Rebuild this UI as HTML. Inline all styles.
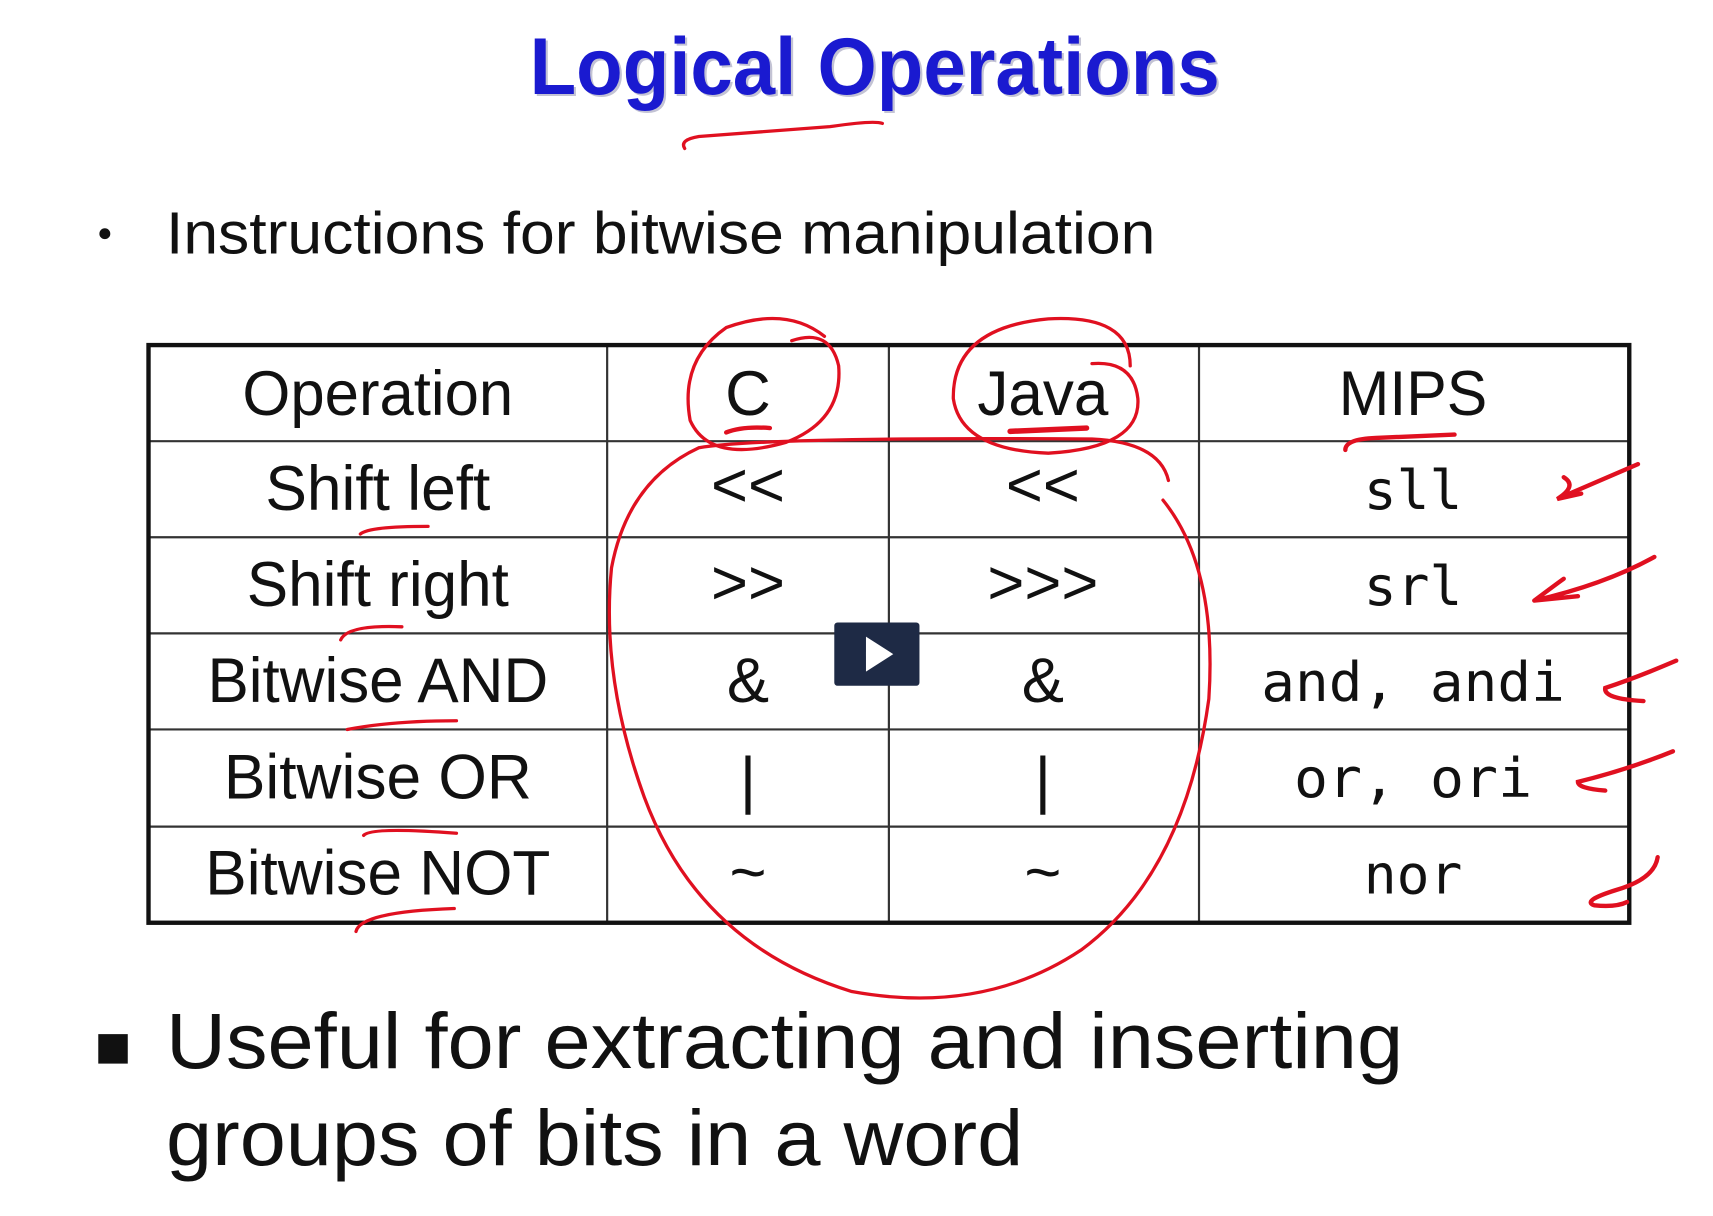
<!DOCTYPE html>
<html><head><meta charset="utf-8"><style>
html,body{margin:0;padding:0;background:#fff;width:1713px;height:1216px;overflow:hidden}
svg{display:block}
</style></head><body>
<svg width="1713" height="1216" viewBox="0 0 1713 1216" xmlns="http://www.w3.org/2000/svg">
<rect width="1713" height="1216" fill="#fff"/>
<g transform="scale(1.092)">
<!-- Title -->
<text x="487" y="88" font-family="Liberation Sans, sans-serif" font-weight="bold" font-size="74" fill="#8888aa" opacity="0.5" textLength="632" lengthAdjust="spacingAndGlyphs">Logical Operations</text>
<text x="485" y="86" font-family="Liberation Sans, sans-serif" font-weight="bold" font-size="74" fill="#1a1ad0" textLength="632" lengthAdjust="spacingAndGlyphs">Logical Operations</text>
<!-- bullet 1 -->
<circle cx="96" cy="214" r="5" fill="#111"/>
<text x="152" y="232" font-family="Liberation Sans, sans-serif" font-size="54" fill="#111" textLength="906" lengthAdjust="spacingAndGlyphs">Instructions for bitwise manipulation</text>
<!-- table grid -->
<g stroke="#333" stroke-width="2">
<line x1="136" y1="404" x2="1492" y2="404"/>
<line x1="136" y1="492" x2="1492" y2="492"/>
<line x1="136" y1="580" x2="1492" y2="580"/>
<line x1="136" y1="668" x2="1492" y2="668"/>
<line x1="136" y1="757" x2="1492" y2="757"/>
<line x1="556" y1="316" x2="556" y2="845"/>
<line x1="814" y1="316" x2="814" y2="845"/>
<line x1="1098" y1="316" x2="1098" y2="845"/>
</g>
<rect x="136" y="316" width="1356" height="529" fill="none" stroke="#111" stroke-width="4"/>
<g font-family="Liberation Sans, sans-serif" font-size="58" fill="#111" text-anchor="middle">
<text x="346" y="380" textLength="248" lengthAdjust="spacingAndGlyphs">Operation</text>
<text x="685" y="380">C</text>
<text x="955" y="380" textLength="120" lengthAdjust="spacingAndGlyphs">Java</text>
<text x="1294" y="380" textLength="136" lengthAdjust="spacingAndGlyphs">MIPS</text>
<text x="346" y="467" textLength="206" lengthAdjust="spacingAndGlyphs">Shift left</text>
<text x="346" y="555" textLength="240" lengthAdjust="spacingAndGlyphs">Shift right</text>
<text x="346" y="643" textLength="312" lengthAdjust="spacingAndGlyphs">Bitwise AND</text>
<text x="346" y="731" textLength="282" lengthAdjust="spacingAndGlyphs">Bitwise OR</text>
<text x="346" y="819" textLength="316" lengthAdjust="spacingAndGlyphs">Bitwise NOT</text>
<text x="685" y="464">&lt;&lt;</text><text x="955" y="464">&lt;&lt;</text>
<text x="685" y="553">&gt;&gt;</text><text x="955" y="553">&gt;&gt;&gt;</text>
<text x="685" y="643">&amp;</text><text x="955" y="643">&amp;</text>
<text x="685" y="734">|</text><text x="955" y="734">|</text>
<text x="685" y="818">~</text><text x="955" y="818">~</text>
</g>
<g font-family="DejaVu Sans Mono, monospace" font-size="50" fill="#111" text-anchor="middle">
<text x="1294" y="466">sll</text>
<text x="1294" y="554">srl</text>
<text x="1294" y="642" textLength="278" lengthAdjust="spacingAndGlyphs">and, andi</text>
<text x="1294" y="730" textLength="218" lengthAdjust="spacingAndGlyphs">or, ori</text>
<text x="1294" y="818">nor</text>
</g>
<!-- bottom bullet -->
<rect x="90" y="947" width="27" height="27" fill="#111"/>
<text x="152" y="978" font-family="Liberation Sans, sans-serif" font-size="72" fill="#111" textLength="1133" lengthAdjust="spacingAndGlyphs">Useful for extracting and inserting</text>
<text x="152" y="1067" font-family="Liberation Sans, sans-serif" font-size="72" fill="#111" textLength="785" lengthAdjust="spacingAndGlyphs">groups of bits in a word</text>
<!-- red annotations -->
<g fill="none" stroke="#e01020" stroke-width="3" stroke-linecap="round">
<path d="M627,136 Q622,128 640,125 L760,116 Q800,110 808,113"/>
<path d="M725,312 Q760,300 768,335 Q772,385 720,405 Q650,425 632,385 Q622,330 665,300 Q720,280 755,308"/>
<path d="M1000,333 Q1038,330 1042,365 Q1045,410 960,415 Q880,412 873,365 Q872,300 960,292 Q1035,288 1035,335"/>
<path d="M1065,458 Q1115,520 1107,640 Q1085,800 990,870 Q900,930 780,908 Q640,865 590,730 Q550,620 560,520 Q575,440 640,410 Q700,400 1000,402 Q1062,405 1070,440"/>
<path d="M665,396 Q680,390 705,392" stroke-width="4"/>
<path d="M925,395 L995,392" stroke-width="5"/>
<path d="M1232,412 Q1232,402 1260,401 L1332,398" stroke-width="4"/>
<path d="M330,489 Q338,482 392,482"/>
<path d="M312,586 Q318,572 368,574"/>
<path d="M318,668 Q360,660 418,660"/>
<path d="M333,765 Q340,757 418,763"/>
<path d="M326,853 Q330,835 416,832"/>
<path d="M1500,425 L1428,456 M1432,437 Q1445,445 1426,457 L1448,452" stroke-width="4"/>
<path d="M1515,510 Q1470,535 1405,550 L1445,546 M1405,550 Q1425,535 1432,530" stroke-width="4"/>
<path d="M1535,605 Q1500,620 1470,630 Q1468,640 1505,642" stroke-width="4"/>
<path d="M1532,688 Q1490,705 1445,716 Q1445,722 1470,724" stroke-width="4"/>
<path d="M1518,785 Q1515,805 1480,815 Q1448,825 1460,829 Q1480,831 1490,826" stroke-width="4"/>
</g>
<!-- play button -->
<rect x="764" y="570" width="78" height="58" rx="3" fill="#1e2a45"/>
<path d="M793,583 L793,615 L818,599 Z" fill="#fff"/>
</g>
</svg>
</body></html>
